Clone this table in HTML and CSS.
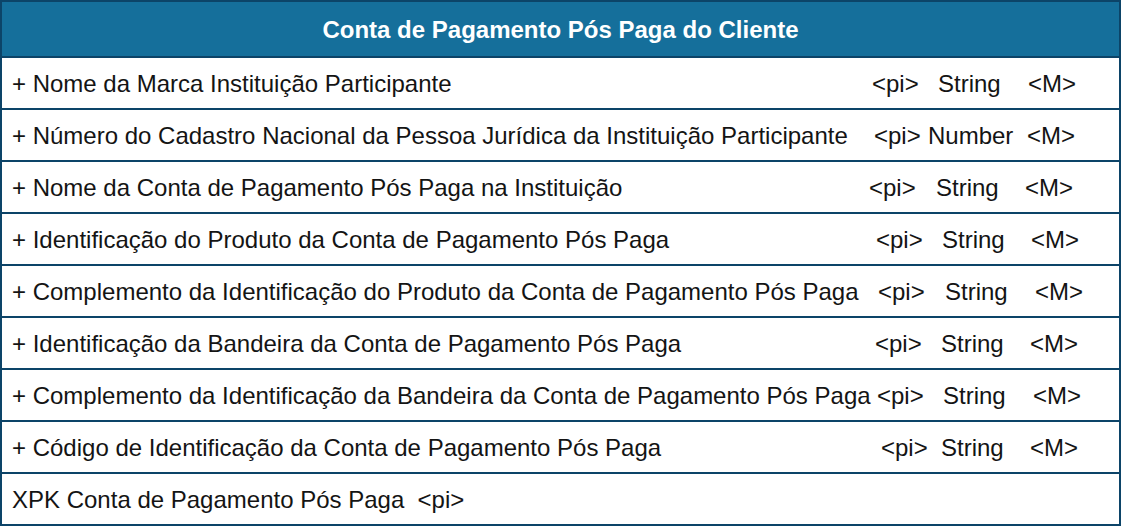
FILE: index.html
```html
<!DOCTYPE html>
<html lang="pt">
<head>
<meta charset="utf-8">
<title>Conta de Pagamento Pós Paga do Cliente</title>
<link rel="stylesheet" href="styles.css">
</head>
<body>
<div class="entity">
  <div class="entity-head">Conta de Pagamento Pós Paga do Cliente</div>
  <div class="attr r1"><span class="name">+ Nome da Marca Instituição Participante</span><span>&lt;pi&gt;</span><span>String</span><span>&lt;M&gt;</span></div>
  <div class="attr r2"><span class="name">+ Número do Cadastro Nacional da Pessoa Jurídica da Instituição Participante</span><span>&lt;pi&gt;</span><span>Number</span><span>&lt;M&gt;</span></div>
  <div class="attr r3"><span class="name">+ Nome da Conta de Pagamento Pós Paga na Instituição</span><span>&lt;pi&gt;</span><span>String</span><span>&lt;M&gt;</span></div>
  <div class="attr r4"><span class="name">+ Identificação do Produto da Conta de Pagamento Pós Paga</span><span>&lt;pi&gt;</span><span>String</span><span>&lt;M&gt;</span></div>
  <div class="attr r5"><span class="name">+ Complemento da Identificação do Produto da Conta de Pagamento Pós Paga</span><span>&lt;pi&gt;</span><span>String</span><span>&lt;M&gt;</span></div>
  <div class="attr r6"><span class="name">+ Identificação da Bandeira da Conta de Pagamento Pós Paga</span><span>&lt;pi&gt;</span><span>String</span><span>&lt;M&gt;</span></div>
  <div class="attr r7"><span class="name">+ Complemento da Identificação da Bandeira da Conta de Pagamento Pós Paga</span><span>&lt;pi&gt;</span><span>String</span><span>&lt;M&gt;</span></div>
  <div class="attr r8"><span class="name">+ Código de Identificação da Conta de Pagamento Pós Paga</span><span>&lt;pi&gt;</span><span>String</span><span>&lt;M&gt;</span></div>
  <div class="key">XPK Conta de Pagamento Pós Paga  &lt;pi&gt;</div>
</div>
</body>
</html>
```
FILE: styles.css
```css
html, body {
  margin: 0;
  padding: 0;
  background: #ffffff;
}

.entity {
  box-sizing: border-box;
  width: 1121px;
  border: 2px solid #0c4468;
  font-family: "Liberation Sans", Arial, sans-serif;
  font-size: 24px;
  color: #141414;
}

.entity-head {
  height: 52px;
  padding-top: 2px;
  background: #156f9b;
  color: #ffffff;
  font-weight: bold;
  display: flex;
  align-items: center;
  justify-content: center;
}

.attr, .key {
  height: 48px;
  padding-top: 2px;
  border-top: 2px solid #0c4468;
  padding-left: 10px;
  align-items: center;
  white-space: pre;
}

.attr {
  display: grid;
  grid-template-columns: var(--c1) var(--c2) var(--c3) auto;
}

.key {
  display: flex;
}

.attr .name {
  white-space: nowrap;
}

.r1 { --c1: 860px; --c2: 66px; --c3: 90px; }
.r2 { --c1: 862px; --c2: 54px; --c3: 99px; }
.r3 { --c1: 857px; --c2: 67px; --c3: 89px; }
.r4 { --c1: 864px; --c2: 66px; --c3: 89px; }
.r5 { --c1: 866px; --c2: 67px; --c3: 90px; }
.r6 { --c1: 863px; --c2: 66px; --c3: 89px; }
.r7 { --c1: 865px; --c2: 66px; --c3: 90px; }
.r8 { --c1: 869px; --c2: 60px; --c3: 89px; }
```
